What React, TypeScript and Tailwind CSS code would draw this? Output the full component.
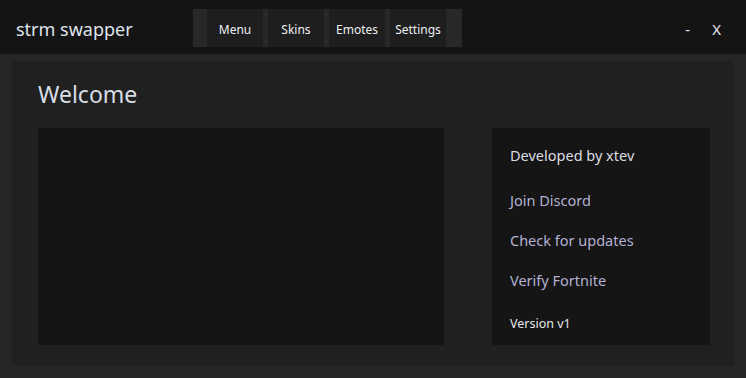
const navItems = ["Menu", "Skins", "Emotes", "Settings"];

const links = ["Join Discord", "Check for updates", "Verify Fortnite"];

export default function App() {
  return (
    <div
      className="w-[746px] h-[378px] bg-[#262626] flex flex-col overflow-hidden"
      style={{ fontFamily: '"Noto Sans", "Open Sans", sans-serif' }}
    >
      {/* title bar */}
      <div className="h-[54px] bg-[#141414] flex items-center pl-4 pr-[25px]">
        <div className="w-[177px] text-[18px] text-[#dfe3ea] leading-none pt-[4px]">strm swapper</div>
        <div className="h-[38px] bg-[#282828] flex items-stretch pl-[14px] pr-[16px] gap-[5px] mt-[2px]">
          {navItems.map((item) => (
            <button
              key={item}
              className="w-[56px] bg-[#1e1e1e] text-[12px] text-[#eef0f4] flex items-center justify-center pt-[3px]"
            >
              {item}
            </button>
          ))}
        </div>
        <div className="ml-auto flex items-center gap-[22px] text-[15px] text-[#e6e8ee] pt-[4px]">
          <span>-</span>
          <span>X</span>
        </div>
      </div>

      {/* body */}
      <div className="flex-1 pt-[7px] px-[12px] pb-[12px]">
        <div className="h-full bg-[#202020] flex flex-col pl-[26px] pr-[24px] pb-[21px]">
          <div className="h-[67px] pt-[17px] text-[23px] leading-[32px] text-[#d8dde6]">Welcome</div>
          <div className="flex-1 flex gap-[48px]">
            <div className="w-[406px] bg-[#151515]" />
            <div className="flex-1 bg-[#151515] flex flex-col pl-[18px]">
              <div className="mt-[17px] h-[20px] leading-[20px] text-[14.5px] text-[#dcdde2]">Developed by xtev</div>
              {links.map((l, i) => (
                <div
                  key={l}
                  className={`${i === 0 ? "mt-[25px]" : "mt-[20px]"} h-[20px] leading-[20px] text-[14.5px] text-[#b3b1d2]`}
                >
                  {l}
                </div>
              ))}
              <div className="mt-[24px] h-[20px] leading-[20px] text-[12.5px] text-[#e6e7ec]">Version v1</div>
            </div>
          </div>
        </div>
      </div>
    </div>
  );
}
